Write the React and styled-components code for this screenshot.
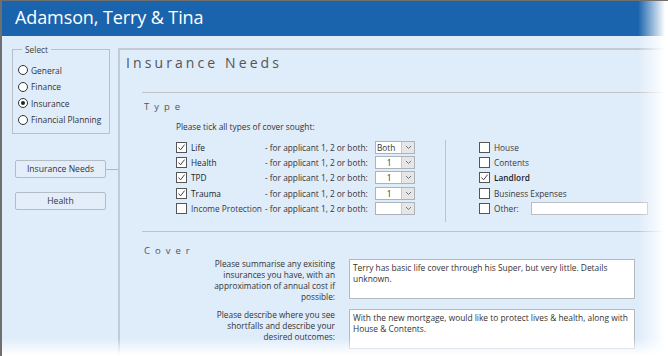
import React from "react";
import styled, { createGlobalStyle } from "styled-components";

const Global = createGlobalStyle`
  html, body { margin: 0; padding: 0; background: #fff; }
  body { font-family: "Open Sans", "Noto Sans", sans-serif; }
`;

const Window = styled.div`
  position: relative;
  width: 668px;
  height: 356px;
  overflow: hidden;
  background: #dfecfa;
  border-left: 2px solid #6f6f6f;
  border-top: 1px solid #6f6f6f;
  box-sizing: border-box;
  &::after {
    content: "";
    position: absolute;
    top: 0;
    right: 0;
    width: 30px;
    height: 100%;
    background: linear-gradient(to right, rgba(255, 255, 255, 0), #fff 90%);
  }
  &::before {
    content: "";
    position: absolute;
    left: 0;
    bottom: 0;
    width: 100%;
    height: 18px;
    z-index: 1;
    background: linear-gradient(to bottom, rgba(255, 255, 255, 0), #fff 95%);
  }
`;

const Header = styled.div`
  height: 35px;
  background: #1a64ad;
  color: #fff;
  font-size: 18px;
  line-height: 32px;
  padding-left: 13px;
  letter-spacing: -0.1px;
`;

const Body = styled.div`
  display: flex;
  padding-top: 12px;
  height: 320px;
`;

const Sidebar = styled.div`
  width: 106px;
  padding-left: 10px;
  margin-top: -4px;
  flex-shrink: 0;
  display: flex;
  flex-direction: column;
`;

const Fieldset = styled.fieldset`
  margin: 0;
  width: 98px;
  height: 90px;
  box-sizing: border-box;
  border: 1px solid #b9c0c8;
  padding: 7px 0 0 5px;
  font-size: 8.4px;
  color: #333;
  legend {
    padding: 0 3px;
    margin-left: 4px;
    color: #444;
  }
`;

const RadioRow = styled.label`
  display: flex;
  align-items: center;
  height: 16.5px;
  gap: 3px;
  color: #333;
`;

const Radio = styled.span`
  width: 8px;
  height: 8px;
  border-radius: 50%;
  border: 1px solid #333;
  background: #fff;
  display: flex;
  align-items: center;
  justify-content: center;
  &::after {
    content: "";
    width: 4px;
    height: 4px;
    border-radius: 50%;
    background: ${(p) => (p.$on ? "#222" : "transparent")};
  }
`;

const NavRow = styled.div`
  display: flex;
  align-items: center;
  margin-top: ${(p) => p.$top}px;
`;

const NavButton = styled.div`
  width: 91px;
  height: 18px;
  box-sizing: border-box;
  margin-left: 3px;
  border: 1px solid #b4bcc6;
  border-radius: 2px;
  background: #e3eefa;
  font-size: 8.6px;
  color: #333;
  display: flex;
  align-items: center;
  justify-content: center;
`;

const Connector = styled.div`
  width: 12px;
  height: 1px;
  background: #b0b8c2;
`;

const Main = styled.div`
  flex: 1;
  border-left: 2px solid #c3cad3;
  border-top: 2px solid #c3cad3;
  padding-left: 6px;
`;

const PageTitle = styled.div`
  font-size: 14px;
  letter-spacing: 3.1px;
  color: #555;
  margin-top: 3px;
  height: 20px;
  line-height: 20px;
`;

const Section = styled.div`
  margin-left: 16px;
  margin-top: ${(p) => p.$top}px;
  border-top: 1px solid #c0c4c9;
  padding-left: 2px;
`;

const SectionTitle = styled.div`
  font-size: 9.5px;
  letter-spacing: 5px;
  color: #555;
  margin-top: ${(p) => p.$top}px;
  height: 13px;
  line-height: 13px;
`;

const Intro = styled.div`
  font-size: 8.3px;
  color: #333;
  margin-left: 32px;
  margin-top: 8px;
  height: 12px;
  line-height: 12px;
`;

const TypeGrid = styled.div`
  display: flex;
  margin-left: 32px;
  margin-top: 7px;
`;

const LeftCol = styled.div`
  width: 269px;
  border-right: 1px solid #c0c4c9;
  padding-bottom: 6px;
`;

const RightCol = styled.div`
  padding-left: 33px;
`;

const Row = styled.div`
  display: flex;
  align-items: center;
  height: 15.2px;
  font-size: 8.3px;
  color: #333;
`;

const Box = styled.span`
  width: 11px;
  height: 11px;
  box-sizing: border-box;
  border: 1px solid #555;
  background: #fff;
  margin-right: 4px;
  flex-shrink: 0;
  display: flex;
  align-items: center;
  justify-content: center;
`;

const Label = styled.span`
  width: ${(p) => p.$w || "auto"};
  color: ${(p) => (p.$on ? "#1e1e1e" : "#3a3a3a")};
  font-weight: ${(p) => (p.$bold ? 600 : 400)};
`;

const Applicant = styled.span`
  width: 110px;
`;

const Select = styled.span`
  display: flex;
  height: 13px;
  box-sizing: border-box;
  border: 1px solid #adb3ba;
  background: #fff;
`;

const SelectValue = styled.span`
  width: 24px;
  text-align: ${(p) => (p.$center ? "center" : "left")};
  padding-left: 1px;
  line-height: 11px;
  font-size: 8.3px;
`;

const SelectArrow = styled.span`
  width: 12px;
  background: #e6e6e6;
  border-left: 1px solid #c8c8c8;
  display: flex;
  align-items: center;
  justify-content: center;
`;

const OtherInput = styled.span`
  margin-left: 12px;
  width: 117px;
  height: 13px;
  box-sizing: border-box;
  border: 1px solid #b9bec4;
  background: #fff;
`;

const CoverRow = styled.div`
  display: flex;
  margin-top: ${(p) => p.$top}px;
`;

const CoverLabel = styled.div`
  width: 191px;
  box-sizing: border-box;
  padding-left: 66px;
  text-align: right;
  font-size: 8.3px;
  line-height: 11px;
  color: #333;
  margin-top: ${(p) => p.$shift}px;
`;

const TextArea = styled.div`
  margin-left: 14px;
  width: 286px;
  height: 40px;
  box-sizing: border-box;
  border: 1px solid #b4b9bf;
  background: #fff;
  padding: 2px 3px;
  font-size: 8.4px;
  line-height: 11px;
  color: #333;
`;

const Check = () => (
  <svg width="9" height="9" viewBox="0 0 9 9">
    <path d="M1.5 4.5 L3.6 6.8 L7.6 1.6" fill="none" stroke="#444" strokeWidth="1" />
  </svg>
);

const Chevron = () => (
  <svg width="7" height="5" viewBox="0 0 7 5">
    <path d="M1 1 L3.5 3.5 L6 1" fill="none" stroke="#666" strokeWidth="0.9" />
  </svg>
);

const CheckBox = ({ on }) => <Box>{on && <Check />}</Box>;

const types = [
  { name: "Life", on: true, val: "Both" },
  { name: "Health", on: true, val: "1" },
  { name: "TPD", on: true, val: "1" },
  { name: "Trauma", on: true, val: "1" },
  { name: "Income Protection", on: false, val: "" },
];

const extras = [
  { name: "House" },
  { name: "Contents" },
  { name: "Landlord", on: true },
  { name: "Business Expenses" },
];

export default function App() {
  return (
    <Window>
      <Global />
      <Header>Adamson, Terry &amp; Tina</Header>
      <Body>
        <Sidebar>
          <Fieldset>
            <legend>Select</legend>
            {["General", "Finance", "Insurance", "Financial Planning"].map((n) => (
              <RadioRow key={n}>
                <Radio $on={n === "Insurance"} />
                {n}
              </RadioRow>
            ))}
          </Fieldset>
          <NavRow $top={26}>
            <NavButton>Insurance Needs</NavButton>
            <Connector />
          </NavRow>
          <NavRow $top={14}>
            <NavButton>Health</NavButton>
          </NavRow>
        </Sidebar>
        <Main>
          <PageTitle>Insurance Needs</PageTitle>
          <Section $top={19}>
            <SectionTitle $top={7}>Type</SectionTitle>
            <Intro>Please tick all types of cover sought:</Intro>
            <TypeGrid>
              <LeftCol>
                {types.map((t) => (
                  <Row key={t.name}>
                    <CheckBox on={t.on} />
                    <Label $w="74px" $on={t.on}>{t.name}</Label>
                    <Applicant>- for applicant 1, 2 or both:</Applicant>
                    <Select>
                      <SelectValue $center={t.val === "1"}>{t.val}</SelectValue>
                      <SelectArrow>
                        <Chevron />
                      </SelectArrow>
                    </Select>
                  </Row>
                ))}
              </LeftCol>
              <RightCol>
                {extras.map((e) => (
                  <Row key={e.name}>
                    <CheckBox on={e.on} />
                    <Label $on={e.on} $bold={e.on}>{e.name}</Label>
                  </Row>
                ))}
                <Row>
                  <CheckBox />
                  <Label>Other:</Label>
                  <OtherInput />
                </Row>
              </RightCol>
            </TypeGrid>
          </Section>
          <Section $top={9}>
            <SectionTitle $top={12}>Cover</SectionTitle>
            <CoverRow $top={2}>
              <CoverLabel $shift={-1}>
                Please summarise any exisiting insurances you have, with an approximation of annual
                cost if possible:
              </CoverLabel>
              <TextArea>Terry has basic life cover through his Super, but very little. Details unknown.</TextArea>
            </CoverRow>
            <CoverRow $top={7}>
              <CoverLabel $shift={0}>
                Please describe where you see shortfalls and describe your desired outcomes:
              </CoverLabel>
              <TextArea>
                With the new mortgage, would like to protect lives &amp; health, along with House &amp;
                Contents.
              </TextArea>
            </CoverRow>
          </Section>
        </Main>
      </Body>
    </Window>
  );
}
